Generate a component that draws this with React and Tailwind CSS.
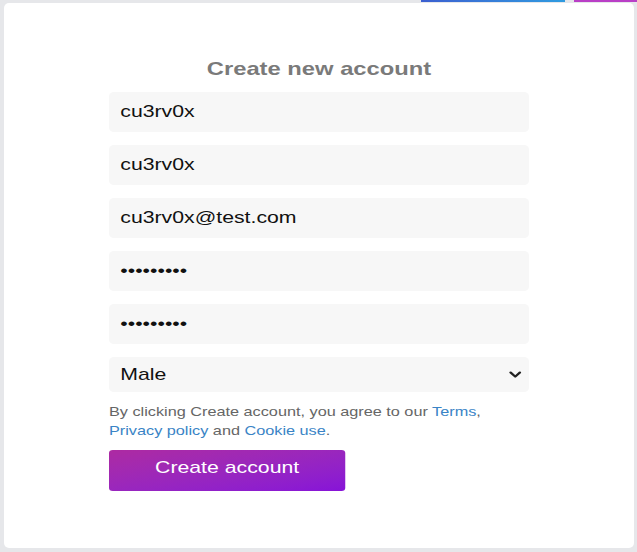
import React, { useState } from 'react'

const fields = [
  { type: 'text', value: 'cu3rv0x' },
  { type: 'text', value: 'cu3rv0x' },
  { type: 'email', value: 'cu3rv0x@test.com' },
  { type: 'password', value: 'cu3rv0x12' },
  { type: 'password', value: 'cu3rv0x12' },
]

const App = () => {
  const [values, setValues] = useState(fields.map(f => f.value))
  const [gender, setGender] = useState('male')

  return (
    <div className='relative w-[637px] h-[552px] bg-[#e6e7ea] pt-[3px] pl-[4px] pr-[3px] pb-[4px] overflow-hidden' style={{ fontFamily: '"Liberation Sans", Arial, sans-serif' }}>
      {/* bits of the page behind the modal */}
      <div className='absolute top-0 left-[421px] w-[144px] h-[2px] bg-gradient-to-r from-[#3b5fd0] to-[#2f9be0]'></div>
      <div className='absolute top-0 left-[574px] w-[63px] h-[2px] bg-[#b93fc6]'></div>

      <div className='relative h-full bg-white rounded-[5px] flex justify-center'>
        {/* the shot is stretched sideways, so the form is too */}
        <form className='w-[336px] flex flex-col pt-[54px] scale-x-[1.25] origin-center' onSubmit={e => e.preventDefault()}>
          <h2 className='text-center text-[19px] font-bold text-[#7a7a7a] leading-[24px] mb-[11px]'>
            Create new account
          </h2>

          <div className='flex flex-col gap-[13px]'>
            {fields.map((f, i) => (
              <input
                key={i}
                type={f.type}
                value={values[i]}
                onChange={e => setValues(values.map((v, j) => j === i ? e.target.value : v))}
                className='h-[40px] w-full rounded-[4px] bg-[#f7f7f7] px-[9px] text-[17px] text-[#111] outline-none'
              />
            ))}
            <div className='relative'>
              <select
                value={gender}
                onChange={e => setGender(e.target.value)}
                className='h-[35px] w-full appearance-none rounded-[4px] bg-[#f7f7f7] px-[9px] text-[17px] text-[#111] outline-none'
              >
                <option value='male'>Male</option>
                <option value='female'>Female</option>
              </select>
              <svg className='pointer-events-none absolute right-[6px] top-[14px]' width='10' height='8' viewBox='0 0 10 8' fill='none'>
                <path d='M1.3 1.5L5 5.6L8.7 1.5' stroke='#222' strokeWidth='2' strokeLinecap='round' strokeLinejoin='round' />
              </svg>
            </div>
          </div>

          <p className='mt-[10px] text-[13px] leading-[19px] text-[#666]'>
            By clicking Create account, you agree to our <a href='#' className='text-[#3a84c6]'>Terms</a>,
            <br />
            <a href='#' className='text-[#3a84c6]'>Privacy policy</a> and <a href='#' className='text-[#3a84c6]'>Cookie use</a>.
          </p>

          <button
            type='submit'
            className='mt-[10px] h-[41px] w-[189px] rounded-[3px] bg-gradient-to-br from-[#ad2aa2] to-[#8712d8] text-[17px] leading-[34px] pb-[6px] text-white'
          >
            Create account
          </button>
        </form>
      </div>
    </div>
  )
}

export default App
